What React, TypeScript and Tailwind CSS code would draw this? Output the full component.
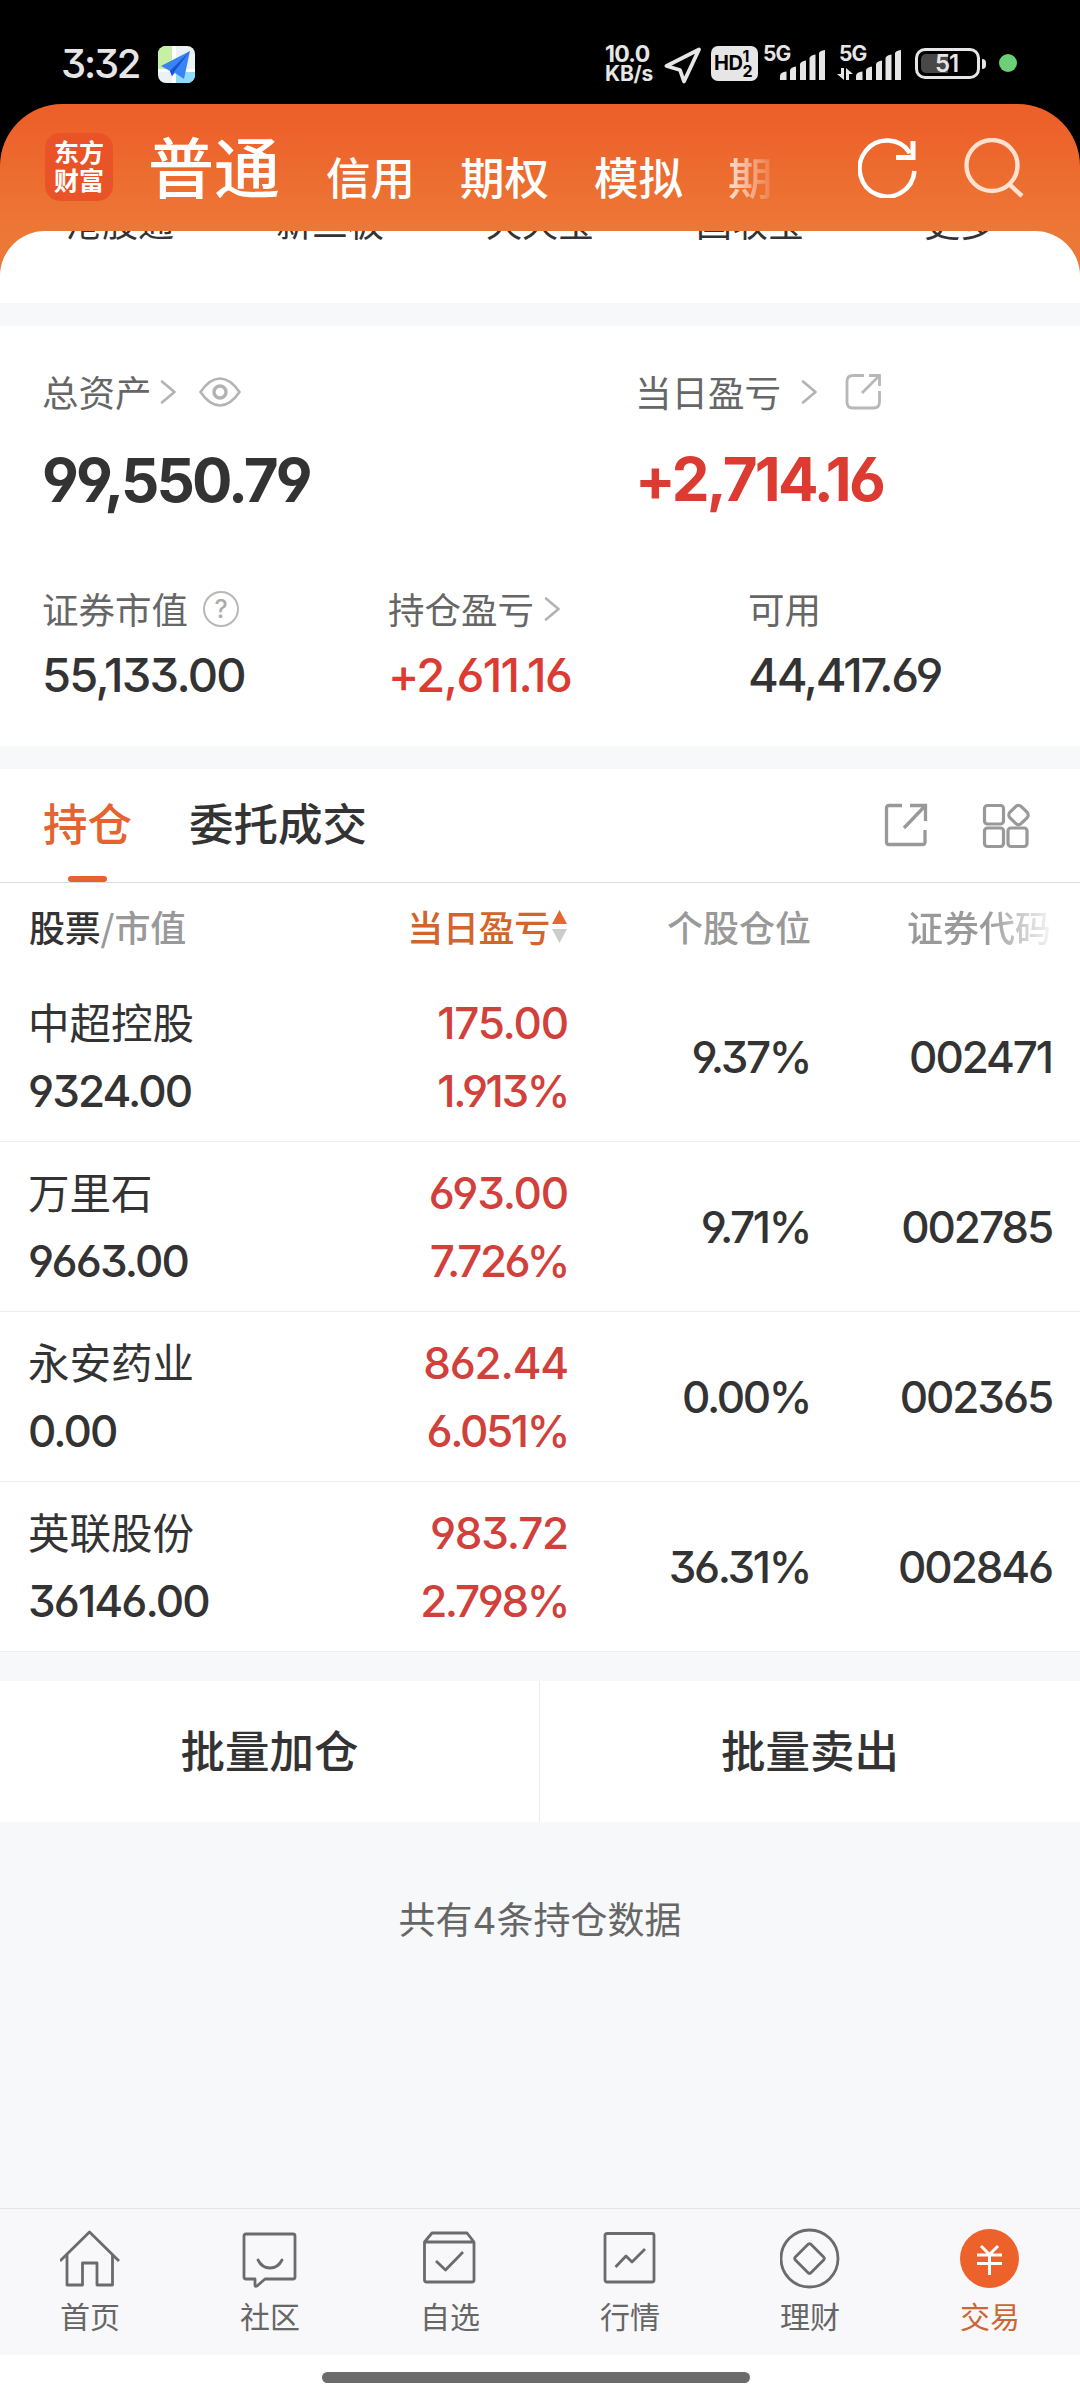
// src/App.tsx
import type { ReactNode } from "react";

const quickLinks = ["港股通", "新三板", "天天宝", "国收宝", "更多"];

const holdings = [
  { name: "中超控股", value: "9324.00", profit: "175.00", rate: "1.913%", weight: "9.37%", code: "002471" },
  { name: "万里石", value: "9663.00", profit: "693.00", rate: "7.726%", weight: "9.71%", code: "002785" },
  { name: "永安药业", value: "0.00", profit: "862.44", rate: "6.051%", weight: "0.00%", code: "002365" },
  { name: "英联股份", value: "36146.00", profit: "983.72", rate: "2.798%", weight: "36.31%", code: "002846" },
];

function Num({ className = "", children }: { className?: string; children: ReactNode }) {
  return (
    <span
      className={`font-['Inter','Noto_Sans_CJK_SC',sans-serif] [font-feature-settings:'cv03','cv04','cv09'] whitespace-nowrap ${className}`}
    >
      {children}
    </span>
  );
}

function Chevron({ className = "" }: { className?: string }) {
  return (
    <svg className={`w-4 h-6 ${className}`} viewBox="0 0 16 24" fill="none" stroke="#b3b3b3" strokeWidth="2.6" strokeLinecap="round" strokeLinejoin="round">
      <path d="M2 1.500 14.500 12 2 22.500" />
    </svg>
  );
}

function SignalBars() {
  return (
    <svg className="w-[46px] h-[30px]" viewBox="0 0 46 30" fill="#e6e6e6">
      <path d="M0 30V26q0-4 6.500-4.500V30z" />
      <path d="M10 30V20q1-3 6-3.500V30z" />
      <path d="M20 30V14q1-3 6-3.500V30z" />
      <path d="M29.500 30V8q1-3 6-3.500V30z" />
      <path d="M39 30V3q1-2.500 6-3V30z" />
    </svg>
  );
}

function StatusBar() {
  return (
    <div className="flex h-[104px] items-start bg-black pt-[44px] pl-[61px] text-[#e6e6e6]">
      <Num className="w-[97px] text-[40px] leading-[40px] font-medium tracking-[-2.2px]">3:32</Num>
      <svg className="mt-[2px] w-[37px] h-[37px]" viewBox="0 0 37 37">
        <defs>
          <clipPath id="mapClip">
            <rect width="37" height="37" rx="8" />
          </clipPath>
        </defs>
        <g clipPath="url(#mapClip)">
          <rect width="37" height="37" fill="#eaf2f5" />
          <path d="M0 0H14V24H0z" fill="#c6f0a4" />
          <path d="M18 26H37V37H18z" fill="#8edcfb" />
          <path d="M14 0H18V37H14zM0 23H37V26H0z" fill="#fff" />
          <path d="M32 5 3 20l9 5 2 5 3-3 9 6z" fill="#3a83f6" />
          <path d="M32 5 12 25l2 5 2-4z" fill="#1453cf" />
        </g>
      </svg>
      <div className="ml-[410px] flex w-[60px] flex-col">
        <Num className="text-[23px] leading-[20px] font-bold tracking-[-0.7px]">10.0</Num>
        <Num className="text-[21px] leading-[20px] font-bold tracking-[-0.2px]">KB/s</Num>
      </div>
      <svg className="mt-[2px] -ml-px w-[38px] h-[38px]" viewBox="0 0 38 38" fill="none" stroke="#e6e6e6" strokeWidth="3.800" strokeLinejoin="round">
        <path d="M35 3.500 2.500 20l13.500 4L20 35.500z" />
      </svg>
      <div className="ml-[9px] mt-[2px] flex h-[35px] w-[47px] items-center rounded-[7px] bg-[#e6e6e6] pl-[3px] text-black">
        <Num className="text-[20px] leading-[35px] font-bold tracking-[-0.5px]">HD</Num>
        <div className="flex flex-col">
          <Num className="text-[16px] leading-[15px] font-bold">1</Num>
          <Num className="text-[16px] leading-[15px] font-bold">2</Num>
        </div>
      </div>
      <div className="relative ml-[5px] h-[36px] w-[76px]">
        <Num className="text-[21px] leading-[20px] font-bold tracking-[-0.8px] block">5G</Num>
        <div className="absolute left-[17px] top-[6px]">
          <SignalBars />
        </div>
      </div>
      <div className="relative h-[36px] w-[76px]">
        <Num className="text-[21px] leading-[20px] font-bold tracking-[-0.8px] block">5G</Num>
        <svg className="absolute left-[-2px] top-[24px] w-[16px] h-[12px]" viewBox="0 0 16 12" fill="#e6e6e6">
          <path d="M4 0H7V12L0 6H4zM9 0l7 6H12V12H9z" />
        </svg>
        <div className="absolute left-[17px] top-[6px]">
          <SignalBars />
        </div>
      </div>
      <div className="mt-[4px] flex h-[31px] w-[65px] items-center rounded-[10px] border-[3px] border-[#e6e6e6] p-[3px]">
        <div className="h-full w-[27px] rounded-l-[5px] bg-[#484848]" />
        <Num className="-ml-[13px] text-[24px] leading-[25px] font-semibold tracking-[-1px]">51</Num>
      </div>
      <div className="ml-[2px] mt-[15px] h-[10px] w-[4px] rounded-r-full bg-[#e6e6e6]" />
      <div className="ml-[13px] mt-[10px] h-[18px] w-[18px] rounded-full bg-[#6bd076]" />
    </div>
  );
}

function TopBar() {
  return (
    <div className="bg-black">
      <div className="flex h-[171px] items-start rounded-t-[62px] bg-linear-to-b from-[#ed602a] from-10% to-[#ec7836] to-75% pl-[45px] text-white">
        <div className="mt-[29px] flex h-[68px] w-[68px] flex-col items-center rounded-[15px] bg-[#ea5328] pt-[4px] text-[25px] leading-[28px] font-bold">
          <span>东方</span>
          <span>财富</span>
        </div>
        <span className="ml-[35px] mt-[20px] text-[66px] leading-[80px] font-medium">普通</span>
        <div className="ml-[46px] mt-[42px] flex gap-[45px] text-[44.5px] leading-[60px] font-medium">
          <span>信用</span>
          <span>期权</span>
          <span>模拟</span>
          <span className="w-[45px] bg-linear-to-r from-white/80 to-white/10 bg-clip-text text-transparent">期</span>
        </div>
        <svg className="ml-[85px] mt-[34px] w-[60px] h-[60px]" viewBox="0 0 60 60" fill="none" stroke="#fff" strokeWidth="4.500">
          <path d="M56.500 33A27.500 28 0 1 1 52 15" />
          <path d="M55 3V19.500H38" strokeWidth="5" />
        </svg>
        <svg className="ml-[46px] mt-[34px] w-[60px] h-[60px]" viewBox="0 0 60 60" fill="none" stroke="#ffe1cf" strokeWidth="4.400">
          <circle cx="28" cy="27.500" r="25.500" />
          <path d="M45 46 58 58" strokeWidth="4.500" />
        </svg>
      </div>
    </div>
  );
}

function ExportIcon({ className = "", stroke }: { className?: string; stroke: string }) {
  return (
    <svg className={className} viewBox="0 0 44 44" fill="none" stroke={stroke} strokeWidth="3.300">
      <path d="M18 2.500H5q-2.500 0-2.500 2.500V39q0 2.500 2.500 2.500H38.500q2.500 0 2.500-2.500V27" />
      <path d="M26 2.500H41.500V18M41 3 20 25" />
    </svg>
  );
}

function Summary() {
  return (
    <div className="h-[420px] bg-white px-[42px] pt-[41px] text-[#333]">
      <div className="flex">
        <div className="w-[593px]">
          <div className="flex h-[50px] items-center text-[36.5px] leading-[50px] text-[#666]">
            总资产
            <Chevron className="ml-[8px]" />
            <svg className="ml-[23px] w-[42px] h-[30px]" viewBox="0 0 42 30" fill="none" stroke="#b3b3b3" strokeWidth="2.600">
              <path d="M1.500 15C8 5.500 14 1.500 21 1.500S34 5.500 40.500 15C34 24.500 28 28.500 21 28.500S8 24.500 1.500 15z" />
              <circle cx="21" cy="15" r="6" strokeWidth="3.400" />
            </svg>
          </div>
          <Num className="mt-[24px] block text-[60px] leading-[78px] font-bold tracking-[-2.8px]">99,550.79</Num>
        </div>
        <div>
          <div className="flex h-[50px] items-center text-[36.5px] leading-[50px] text-[#666]">
            当日盈亏
            <Chevron className="ml-[20px]" />
            <svg className="ml-[28px] w-[36px] h-[36px]" viewBox="0 0 36 36" fill="none" stroke="#b8b8b8" strokeWidth="2.800">
              <path d="M19 1.500H8q-6 0-6 6V28q0 6 6 6H28.500q6 0 6-6V17" />
              <path d="M24 1.500H34.500V12M34 2 17 19" />
            </svg>
          </div>
          <Num className="mt-[24px] block text-[60px] leading-[76px] font-bold tracking-[-2.7px] text-[#dc3b32]">+2,714.16</Num>
        </div>
      </div>
      <div className="mt-[65px] flex">
        <div className="w-[346px]">
          <div className="flex h-[50px] items-center text-[36.5px] leading-[50px] text-[#666]">
            证券市值
            <span className="ml-[15px] flex h-[36px] w-[36px] items-center justify-center rounded-full border-[2.5px] border-[#b8b8b8] text-[#aaa]">
              <Num className="text-[25px] leading-[30px] font-medium">?</Num>
            </span>
          </div>
          <Num className="mt-[11px] block text-[47px] leading-[60px] font-medium tracking-[-1.7px]">55,133.00</Num>
        </div>
        <div className="w-[360px]">
          <div className="flex h-[50px] items-center text-[36.5px] leading-[50px] text-[#666]">
            持仓盈亏
            <Chevron className="ml-[10px]" />
          </div>
          <Num className="mt-[11px] block text-[47px] leading-[60px] font-medium tracking-[-1.6px] text-[#dc3b32]">+2,611.16</Num>
        </div>
        <div>
          <div className="h-[50px] text-[36.5px] leading-[50px] text-[#666]">可用</div>
          <Num className="mt-[11px] block text-[47px] leading-[60px] font-medium tracking-[-2.2px]">44,417.69</Num>
        </div>
      </div>
    </div>
  );
}

function HoldingTabs() {
  return (
    <div className="flex h-[114px] items-start border-b border-[#dcdcdc] bg-white pl-[43px] text-[44.5px] leading-[60px] text-[#333]">
      <div className="flex h-[113px] flex-col items-center justify-between pt-[23px] font-medium text-[#e4632f]">
        持仓
        <div className="h-[6px] w-[39px] rounded-full bg-[#e4632f]" />
      </div>
      <span className="ml-[57px] mt-[23px] font-medium">委托成交</span>
      <ExportIcon className="ml-[517px] mt-[34px] w-[44px] h-[44px]" stroke="#999" />
      <svg className="ml-[54px] mt-[34px] w-[48px] h-[46px]" viewBox="0 0 48 46" fill="none" stroke="#999" strokeWidth="3.200">
        <rect x="2.500" y="2.500" width="19" height="18.500" rx="3" />
        <rect x="2.500" y="25" width="19" height="18.500" rx="3" />
        <rect x="26" y="25" width="19" height="18.500" rx="3" />
        <rect x="28.500" y="4" width="16" height="16" rx="4" transform="rotate(45 36.500 12)" />
      </svg>
    </div>
  );
}

function Holdings() {
  return (
    <div className="bg-white text-[#333]">
      <div className="flex h-[89px] items-start px-[29px] pt-[18px] text-[36px] leading-[50px] font-medium text-[#999]">
        <div className="w-[280px] tracking-[-0.2px]">
          <span className="text-[#333]">股票</span>/市值
        </div>
        <div className="flex w-[258px] items-center justify-end text-[#d2642c]">
          <span className="tracking-[-0.3px]">当日盈亏</span>
          <svg className="w-[15px] h-[34px] ml-[2px]" viewBox="0 0 15 34">
            <path d="M7.500 1 15 15H0z" fill="#e4682f" />
            <path d="M0 20H15L7.500 34z" fill="#ccc" />
          </svg>
        </div>
        <div className="w-[244px] text-right">个股仓位</div>
        <div className="ml-auto bg-linear-to-r from-[#999] from-55% to-[#999]/10 bg-clip-text text-transparent">证券代码</div>
      </div>
      {holdings.map((h) => (
        <div key={h.code} className="flex h-[170px] border-b border-[#ededed] px-[28px] pt-[17px] text-[44px] leading-[68px]">
          <div className="w-[281px]">
            <div className="-mt-[2px] mb-[2px] text-[41.5px]">{h.name}</div>
            <Num className="block font-medium tracking-[-1.9px]">{h.value}</Num>
          </div>
          <div className="w-[259px] text-right font-medium text-[#d1403a]">
            <Num className="block tracking-[-1.2px]">{h.profit}</Num>
            <Num className="block tracking-[-2.4px]">{h.rate}</Num>
          </div>
          <Num className="mt-[34px] w-[242px] text-right font-medium tracking-[-2.4px]">{h.weight}</Num>
          <Num className="mt-[34px] ml-auto font-medium tracking-[-2.1px]">{h.code}</Num>
        </div>
      ))}
    </div>
  );
}

function TabItem({ label, active, children }: { label: string; active?: boolean; children: ReactNode }) {
  return (
    <div className={`flex flex-1 flex-col items-center text-[30px] leading-[40px] ${active ? "text-[#cd6636]" : "text-[#666]"}`}>
      <svg className="w-[60px] h-[61px] mb-[6px]" viewBox="0 0 60 61" fill="none" stroke="#6b6b6b" strokeWidth="2.800" strokeLinejoin="round">
        {children}
      </svg>
      {label}
    </div>
  );
}

function BottomNav() {
  return (
    <div className="flex h-[147px] border-t border-[#e4e4e6] bg-[#f8f8fa] pt-[19px]">
      <TabItem label="首页">
        <path d="M0 33 29.500 4 59 33" />
        <path d="M7 27V57H22.500V35H37V57H52.500V27" />
      </TabItem>
      <TabItem label="社区">
        <path d="M6 6H53q2 0 2 2V49q0 2-2 2H25l-8 7q-2 1-2-1V51H6q-2 0-2-2V8q0-2 2-2z" />
        <path d="M18 32q4 8 12 8t12-8" strokeLinecap="round" />
      </TabItem>
      <TabItem label="自选">
        <path d="M4.500 14 12 5H47l7 9V52q0 2-2 2H6.500q-2 0-2-2zH54" />
        <path d="M16 33l9.500 9L43 24" />
      </TabItem>
      <TabItem label="行情">
        <rect x="5" y="5.500" width="49" height="48.500" rx="2" />
        <path d="M15.500 39 26 28l6 6L45 21" />
      </TabItem>
      <TabItem label="理财">
        <circle cx="29.500" cy="30.500" r="28.500" />
        <rect x="18.500" y="19.500" width="22" height="22" rx="2" transform="rotate(45 29.500 30.500)" />
      </TabItem>
      <TabItem label="交易" active>
        <circle cx="29.500" cy="30.500" r="29.500" fill="#ed622b" stroke="none" />
        <path d="M21 18l8.500 8.500L38 18M17 27H42M17 35.500H42M29.500 26.500V47" stroke="#fff" strokeWidth="3" />
      </TabItem>
    </div>
  );
}

export default function App() {
  return (
    <div className="flex h-[2400px] w-[1080px] flex-col overflow-hidden bg-[#f7f8fa] font-['Noto_Sans_CJK_SC',sans-serif]">
      <StatusBar />
      <TopBar />
      {/* scrolled panel, its quick links are cut off by the header */}
      <div className="relative -mt-[44px] flex h-[72px] shrink-0 items-start overflow-hidden rounded-t-[45px] bg-white px-[15px] text-[36px] leading-[50px] text-[#333]">
        {quickLinks.map((label) => (
          <span key={label} className="-mt-[35px] w-[210px] text-center">
            {label}
          </span>
        ))}
      </div>
      <div className="mt-[23px]">
        <Summary />
      </div>
      <div className="mt-[23px]">
        <HoldingTabs />
        <Holdings />
      </div>
      <div className="mt-[29px] grid h-[141px] grid-cols-2 bg-white text-center text-[44.5px] leading-[135px] font-medium text-[#333]">
        <div className="border-r border-[#ebebeb]">批量加仓</div>
        <div>批量卖出</div>
      </div>
      <div className="mt-[71px] text-center text-[37px] leading-[50px] text-[#666]">
        共有<Num>4</Num>条持仓数据
      </div>
      <div className="mt-auto">
        <BottomNav />
        <div className="flex h-[45px] bg-white pt-[17px] pl-[322px]">
          <div className="h-[11px] w-[428px] rounded-full bg-[#6b6b6b]" />
        </div>
      </div>
    </div>
  );
}
